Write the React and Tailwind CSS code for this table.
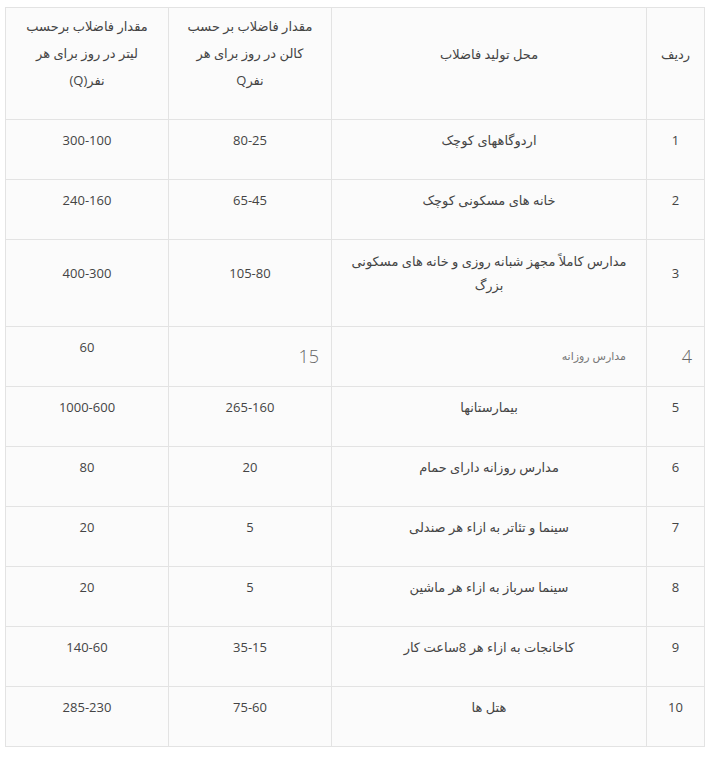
const rows = [
  { n: "1", place: "اردوگاههای کوچک", gal: "80-25", lit: "300-100" },
  { n: "2", place: "خانه های مسکونی کوچک", gal: "65-45", lit: "240-160" },
  {
    n: "3",
    place: ["مدارس کاملاً مجهز شبانه روزی و خانه های مسکونی", "بزرگ"],
    gal: "105-80",
    lit: "400-300",
    tall: true,
  },
  { n: "4", odd: true, place: "مدارس روزانه", gal: "15", lit: "60" },
  { n: "5", place: "بیمارستانها", gal: "265-160", lit: "1000-600" },
  { n: "6", place: "مدارس روزانه دارای حمام", gal: "20", lit: "80" },
  { n: "7", place: "سینما و تئاتر به ازاء هر صندلی", gal: "5", lit: "20" },
  { n: "8", place: "سینما سرباز به ازاء هر ماشین", gal: "5", lit: "20" },
  { n: "9", place: "کاخانجات به ازاء هر 8ساعت کار", gal: "35-15", lit: "140-60" },
  { n: "10", place: "هتل ها", gal: "75-60", lit: "285-230" },
];

const font = { fontFamily: '"Open Sans", "DejaVu Sans", sans-serif' };

function Lines({ text, leading = "leading-[26px]" }) {
  const parts = Array.isArray(text) ? text : [text];
  return (
    <p className={`mb-5 ${leading}`}>
      {parts.map((t, i) => (
        <span key={i}>
          {i > 0 && <br />}
          {t}
        </span>
      ))}
    </p>
  );
}

const td = "border border-[#e3e3e3] px-2 py-0 align-middle text-center";

export default function App() {
  return (
    <div className="bg-white min-h-[758px] pt-[7px] pl-[5px] pr-[5px]" style={font}>
      <table
        dir="rtl"
        className="w-[699px] table-fixed border-collapse bg-[#fbfbfb] text-[13px] text-[#444]"
      >
        <colgroup>
          <col className="w-[58px]" />
          <col className="w-[315px]" />
          <col className="w-[163px]" />
          <col className="w-[163px]" />
        </colgroup>
        <tbody>
          <tr className="h-[112px]">
            <td className={td}>
              <Lines text="ردیف" />
            </td>
            <td className={td}>
              <Lines text="محل تولید فاضلاب" />
            </td>
            <td className={td}>
              <Lines
                leading="leading-[27px]"
                text={["مقدار  فاضلاب بر حسب", "کالن در روز برای هر", "نفرQ"]}
              />
            </td>
            <td className={td}>
              <Lines
                leading="leading-[27px]"
                text={["مقدار فاضلاب برحسب", "لیتر در روز برای هر", "نفر(Q)"]}
              />
            </td>
          </tr>
          {rows.map((r) =>
            r.odd ? (
              <tr key={r.n} className="h-[60px]">
                <td className="border border-[#e3e3e3] pr-[12px] align-middle text-right text-[18px] font-light text-[#666]">
                  {r.n}
                </td>
                <td className="border border-[#e3e3e3] pr-[20px] align-middle text-right text-[11px] text-[#777]">
                  {r.place}
                </td>
                <td className="border border-[#e3e3e3] pr-[12px] align-middle text-right text-[18px] font-light text-[#666]">
                  {r.gal}
                </td>
                <td className={td}>
                  <Lines text={r.lit} />
                </td>
              </tr>
            ) : (
              <tr key={r.n} className={r.tall ? "h-[87px]" : "h-[60px]"}>
                <td className={td}>
                  <Lines text={r.n} />
                </td>
                <td className={td}>
                  <Lines text={r.place} leading={r.tall ? "leading-[24px]" : "leading-[26px]"} />
                </td>
                <td className={td}>
                  <Lines text={r.gal} />
                </td>
                <td className={td}>
                  <Lines text={r.lit} />
                </td>
              </tr>
            )
          )}
        </tbody>
      </table>
    </div>
  );
}
